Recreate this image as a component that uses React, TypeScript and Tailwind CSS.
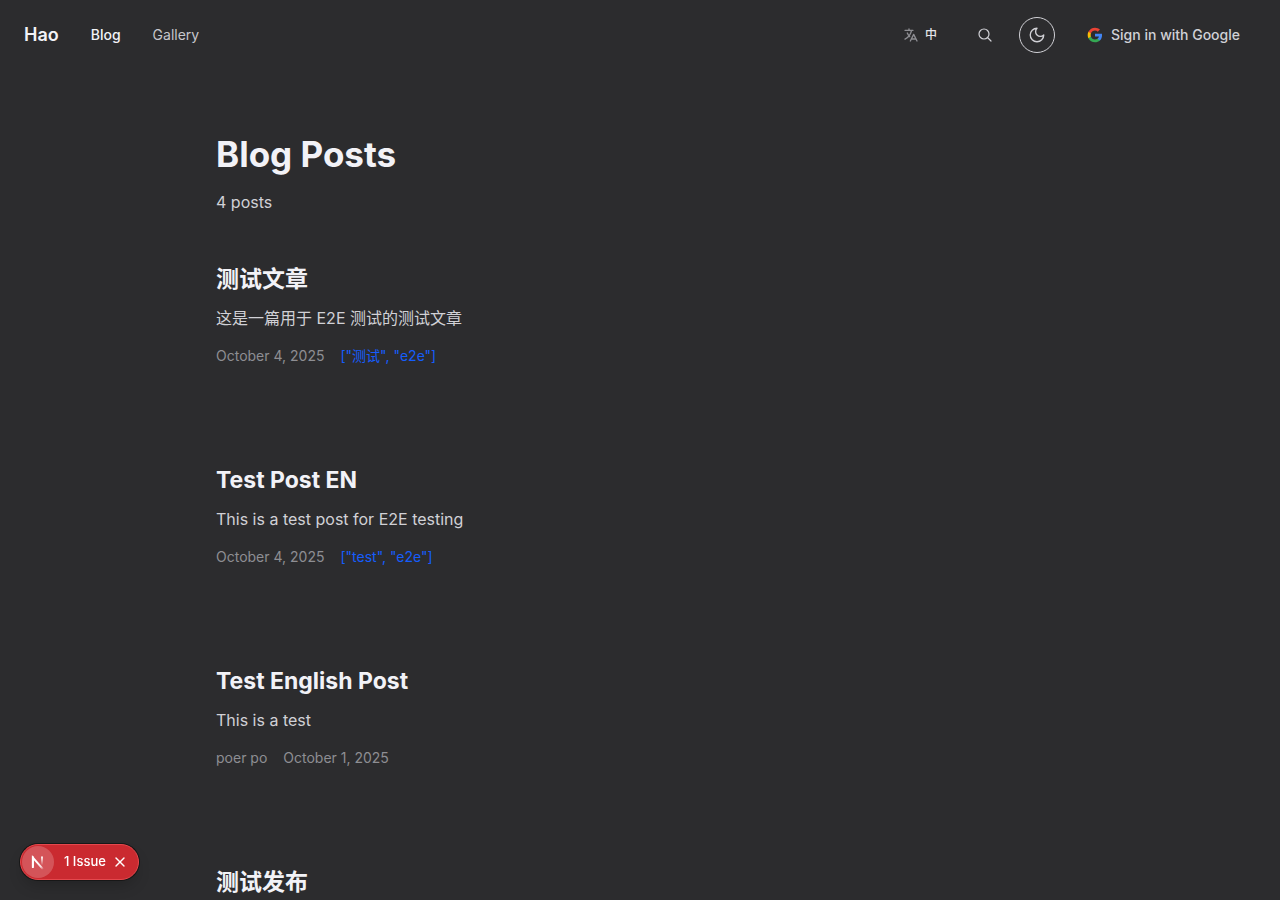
import { X } from "lucide-react";

type Post = { title: string; summary?: string; author?: string; date?: string; tags?: string };

const posts: Post[] = [
  { title: "测试文章", summary: "这是一篇用于 E2E 测试的测试文章", date: "October 4, 2025", tags: '["测试", "e2e"]' },
  { title: "Test Post EN", summary: "This is a test post for E2E testing", date: "October 4, 2025", tags: '["test", "e2e"]' },
  { title: "Test English Post", summary: "This is a test", author: "poer po", date: "October 1, 2025" },
  { title: "测试发布" },
];

function GoogleLogo() {
  return (
    <svg viewBox="0 0 24 24" className="size-4" aria-hidden="true">
      <path fill="#4285F4" d="M22.56 12.25c0-.78-.07-1.53-.2-2.25H12v4.26h5.92c-.26 1.37-1.04 2.53-2.21 3.31v2.77h3.57c2.08-1.92 3.28-4.74 3.28-8.09z" />
      <path fill="#34A853" d="M12 23c2.97 0 5.46-.98 7.28-2.66l-3.57-2.77c-.98.66-2.23 1.06-3.71 1.06-2.86 0-5.29-1.93-6.16-4.53H2.18v2.84C3.99 20.53 7.7 23 12 23z" />
      <path fill="#FBBC05" d="M5.84 14.09c-.22-.66-.35-1.36-.35-2.09s.13-1.43.35-2.09V7.07H2.18C1.43 8.55 1 10.22 1 12s.43 3.45 1.18 4.93l3.66-2.84z" />
      <path fill="#EA4335" d="M12 5.38c1.62 0 3.06.56 4.21 1.64l3.15-3.15C17.45 2.09 14.97 1 12 1 7.7 1 3.99 3.47 2.18 7.07l3.66 2.84c.87-2.6 3.3-4.53 6.16-4.53z" />
    </svg>
  );
}

function TranslateIcon() {
  return (
    <svg viewBox="0 0 24 24" fill="none" stroke="currentColor" strokeWidth="2" strokeLinecap="round" strokeLinejoin="round" className="size-4 text-[#8e8e93]" aria-hidden="true">
      <path d="M3 5h12M9 3v2m1.048 9.5A18.022 18.022 0 016.412 9m6.088 9h7M11 21l5-10 5 10M12.751 5C11.783 10.77 8.07 15.61 3 18.129" />
    </svg>
  );
}

function SearchIcon() {
  return (
    <svg viewBox="0 0 24 24" fill="none" stroke="currentColor" strokeWidth="1.8" strokeLinecap="round" strokeLinejoin="round" className="size-4" aria-hidden="true">
      <path d="M21 21l-5.197-5.197m0 0A7.5 7.5 0 105.196 5.196a7.5 7.5 0 0010.607 10.607z" />
    </svg>
  );
}

function MoonIcon() {
  return (
    <svg viewBox="0 0 24 24" fill="none" stroke="currentColor" strokeWidth="1.8" strokeLinecap="round" strokeLinejoin="round" className="size-[18px]" aria-hidden="true">
      <path d="M12 3a6 6 0 0 0 9 9 9 9 0 1 1-9-9Z" />
    </svg>
  );
}

function NextMark() {
  return (
    <svg viewBox="0 0 40 40" fill="none" className="size-8" aria-hidden="true">
      <defs>
        <linearGradient id="diagonal" gradientUnits="userSpaceOnUse" x1="20" y1="20" x2="27" y2="29">
          <stop stopColor="white" />
          <stop offset="0.6" stopColor="white" stopOpacity="0.8" />
          <stop offset="1" stopColor="white" stopOpacity="0" />
        </linearGradient>
        <linearGradient id="stem" gradientUnits="userSpaceOnUse" x1="25" y1="13" x2="25" y2="24">
          <stop stopColor="white" />
          <stop offset="1" stopColor="white" stopOpacity="0" />
        </linearGradient>
      </defs>
      <path d="M13.6 26V14.4L26.2 29" stroke="url(#diagonal)" strokeWidth="2.4" />
      <path d="M13.6 27.5V13" stroke="white" strokeWidth="2.4" />
      <path d="M25 13V24" stroke="url(#stem)" strokeWidth="2.4" />
    </svg>
  );
}

export default function App() {
  return (
    <div className="h-screen overflow-hidden bg-[#2c2c2e] font-['Inter','Noto_Sans_CJK_SC',sans-serif] text-[#f2f2f7]">
      <header className="flex h-[70px] items-center justify-between px-6">
        <nav className="flex items-center gap-8 text-sm">
          <a href="#" className="text-lg font-semibold">Hao</a>
          <a href="#" className="font-medium">Blog</a>
          <a href="#" className="text-[#c7c7cc]">Gallery</a>
        </nav>
        <div className="flex items-center gap-4">
          <button className="mr-3.5 flex items-center gap-1.5 text-xs font-medium text-[#e5e5ea]">
            <TranslateIcon />中
          </button>
          <button aria-label="Search" className="flex size-9 items-center justify-center text-[#d1d1d6]"><SearchIcon /></button>
          <button aria-label="Toggle theme" className="flex size-9 items-center justify-center rounded-full border border-[#d1d1d6] text-[#d1d1d6]"><MoonIcon /></button>
          <button className="flex h-9 items-center gap-2 px-4 text-sm font-medium text-[#d1d1d6]"><GoogleLogo />Sign in with Google</button>
        </div>
      </header>
      <main className="mx-auto max-w-4xl px-6 pt-16">
        <h1 className="text-[35px] leading-10 font-bold">Blog Posts</h1>
        <p className="mt-4 text-[#d1d1d6]">4 posts</p>
        <div className="mt-12 flex flex-col gap-[97px]">
          {posts.map((p) => (
            <article key={p.title}>
              <h2 className="text-[23px] leading-[34px] font-bold">{p.title}</h2>
              {p.summary && <p className="mt-2.5 text-[#d1d1d6]">{p.summary}</p>}
              {p.date && (
                <div className="mt-4 flex gap-4 text-sm text-[#8e8e93]">
                  {p.author && <span>{p.author}</span>}
                  <span>{p.date}</span>
                  {p.tags && <span className="text-[#155dfc]">{p.tags}</span>}
                </div>
              )}
            </article>
          ))}
        </div>
      </main>
      <div className="fixed bottom-5 left-5 flex h-9 items-center rounded-full border border-[#e5484d] bg-[#ca2a30] pr-2 pl-px text-[13px] font-medium text-white shadow-[0_0_0_1px_#171717,0_8px_16px_-4px_rgba(0,0,0,0.24)]">
        <button aria-label="Open tools" className="rounded-full bg-white/20"><NextMark /></button>
        <button className="ml-2.5">1 Issue</button>
        <button aria-label="Dismiss" className="ml-1 flex size-5 items-center justify-center"><X className="size-4" strokeWidth={2} /></button>
      </div>
    </div>
  );
}
